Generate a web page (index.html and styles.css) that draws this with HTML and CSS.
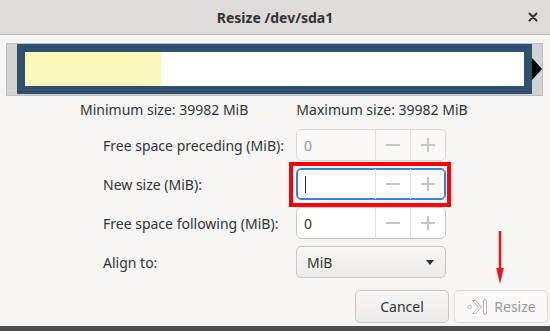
FILE: index.html
```html
<!DOCTYPE html>
<html lang="en">
<head>
    <meta charset="UTF-8">
    <title>Resize /dev/sda1</title>
    <link rel="stylesheet" href="styles.css">
</head>
<body>
    <div class="dialog">
        <div class="titlebar">
            <span class="title">Resize /dev/sda1</span>
            <span class="close">
                <svg width="10" height="10" viewBox="0 0 10 10"><path d="M1.5 1.5 L8.5 8.5 M8.5 1.5 L1.5 8.5" stroke="#2e3436" stroke-width="2" stroke-linecap="round"/></svg>
            </span>
        </div>

        <div class="partition-bar">
            <div class="partition">
                <div class="used"></div>
            </div>
            <div class="grow-arrow"></div>
        </div>

        <div class="sizes">
            <span>Minimum size: 39982 MiB</span>
            <span>Maximum size: 39982 MiB</span>
        </div>

        <div class="form-grid">
            <label>Free space preceding (MiB):</label>
            <div class="spin disabled">
                <div class="spin-entry">0</div>
                <div class="spin-btn"><span class="minus"></span></div>
                <div class="spin-btn last"><span class="plus"></span></div>
            </div>

            <label>New size (MiB):</label>
            <div class="spin focused">
                <div class="spin-entry"><span class="caret"></span></div>
                <div class="spin-btn"><span class="minus"></span></div>
                <div class="spin-btn last"><span class="plus"></span></div>
            </div>

            <label>Free space following (MiB):</label>
            <div class="spin">
                <div class="spin-entry">0</div>
                <div class="spin-btn"><span class="minus"></span></div>
                <div class="spin-btn last"><span class="plus"></span></div>
            </div>

            <label>Align to:</label>
            <div class="combo">
                <span>MiB</span>
                <span class="combo-arrow"></span>
            </div>
        </div>

        <div class="actions">
            <button class="btn">Cancel</button>
            <button class="btn disabled">
                <svg class="resize-icon" width="22" height="18" viewBox="0 0 22 18">
                    <circle cx="2.5" cy="9" r="1.7" fill="none" stroke="#b4b7b7" stroke-width="1"/>
                    <path d="M5.5 2.5 H8.5 L14.5 9 L8.5 15.5 H5.5 L11.5 9 Z" fill="none" stroke="#b4b7b7" stroke-width="1" stroke-linejoin="round"/>
                    <rect x="16.5" y="1.5" width="3" height="15" rx="1.5" fill="none" stroke="#b4b7b7" stroke-width="1"/>
                </svg>
                Resize
            </button>
        </div>

        <!-- annotations -->
        <div class="highlight"></div>
        <svg class="red-arrow" width="12" height="56" viewBox="0 0 12 56">
            <path d="M6 1 V40" stroke="#e8141b" stroke-width="2.5"/>
            <path d="M2.2 38 H9.8 L6 54 Z" fill="#e8141b"/>
        </svg>
    </div>
</body>
</html>
```

FILE: styles.css
```css
:root {
    --text: #2e3436;
    --bg: #f6f5f4;
    --border: #cdc7c2;
    --focus: #3584e4;
}
body {
    margin: 0;
    height: 331px;
    background: #4e4e4e;
    font-family: 'Noto Sans', 'Open Sans', sans-serif;
    font-size: 14px;
    color: var(--text);
    overflow: hidden;
}
.dialog {
    position: relative;
    width: 550px;
    height: 326px;
    background: var(--bg);
    display: flex;
    flex-direction: column;
    box-sizing: border-box;
}
.titlebar {
    position: relative;
    height: 35px;
    box-sizing: border-box;
    background: #dedbd8;
    border-bottom: 1px solid #c0bdb8;
    display: flex;
    align-items: center;
    justify-content: center;
}
.title {
    font-weight: 700;
    font-size: 14px;
}
.close {
    position: absolute;
    right: 12px;
    top: 12px;
    display: flex;
}
.partition-bar {
    margin: 8px 0 0 6px;
    width: 537px;
    height: 53px;
    box-sizing: border-box;
    background: #d2d2d2;
    border: 1px solid #bfbfbf;
    display: flex;
    align-items: flex-start;
    padding-left: 10px;
}
.partition {
    width: 516px;
    height: 50px;
    box-sizing: border-box;
    border: 8px solid #31506d;
    background: #fff;
    display: flex;
}
.used {
    width: 136px;
    background: #f7f8b9;
}
.grow-arrow {
    margin-top: 14px;
    width: 0;
    height: 0;
    border-left: 10px solid #000;
    border-top: 11px solid transparent;
    border-bottom: 11px solid transparent;
}
.sizes {
    display: flex;
    gap: 48px;
    margin: 4px 0 0 80px;
    line-height: 20px;
}
.form-grid {
    display: grid;
    grid-template-columns: 193px 150px;
    grid-auto-rows: 32px;
    row-gap: 7px;
    margin: 9px 0 0 103px;
}
.form-grid label {
    display: flex;
    align-items: center;
}
.spin {
    display: flex;
    height: 32px;
    box-sizing: border-box;
    border: 1px solid var(--border);
    border-radius: 5px;
    background: #fff;
}
.spin-entry {
    width: 79px;
    padding-left: 7px;
    box-sizing: border-box;
    display: flex;
    align-items: center;
}
.spin-btn {
    width: 34px;
    border-left: 1px solid #e3e0dd;
    display: flex;
    align-items: center;
    justify-content: center;
}
.spin-btn.last {
    width: 35px;
}
.minus, .plus {
    position: relative;
    width: 14px;
    height: 14px;
}
.minus::before, .plus::before, .plus::after {
    content: '';
    position: absolute;
    background: #c4c6c6;
}
.minus::before, .plus::before {
    left: 0;
    top: 6px;
    width: 14px;
    height: 1.5px;
}
.plus::after {
    left: 6.25px;
    top: 0;
    width: 1.5px;
    height: 14px;
}
.spin.disabled {
    background: #faf9f8;
    border-color: #dcd8d4;
    color: #939696;
}
.spin.focused {
    border-color: var(--focus);
    box-shadow: inset 0 0 0 1px var(--focus);
}
.caret {
    display: block;
    width: 1px;
    height: 17px;
    margin-left: 1px;
    background: var(--text);
}
.combo {
    height: 32px;
    box-sizing: border-box;
    border: 1px solid var(--border);
    border-radius: 5px;
    background: linear-gradient(#f7f6f5, #edebe9);
    display: flex;
    align-items: center;
    justify-content: space-between;
    padding: 0 11px 0 10px;
}
.combo-arrow {
    width: 0;
    height: 0;
    border-top: 5px solid var(--text);
    border-left: 4.5px solid transparent;
    border-right: 4.5px solid transparent;
}
.actions {
    display: flex;
    justify-content: flex-end;
    gap: 5px;
    margin-top: 12px;
    padding-right: 2px;
}
.btn {
    width: 94px;
    height: 33px;
    border: 1px solid var(--border);
    border-radius: 5px;
    background: linear-gradient(#f7f6f5, #edebe9);
    font-family: inherit;
    font-size: 14px;
    color: var(--text);
    display: flex;
    align-items: center;
    justify-content: center;
    gap: 5px;
    padding: 0;
}
.btn.disabled {
    background: #faf9f8;
    border-color: #dedad6;
    color: #959898;
}
.resize-icon {
    margin-left: 1px;
}
.highlight {
    position: absolute;
    left: 289px;
    top: 162px;
    width: 162px;
    height: 45px;
    box-sizing: border-box;
    border: 4px solid #f00;
}
.red-arrow {
    position: absolute;
    left: 494px;
    top: 230px;
}
```
